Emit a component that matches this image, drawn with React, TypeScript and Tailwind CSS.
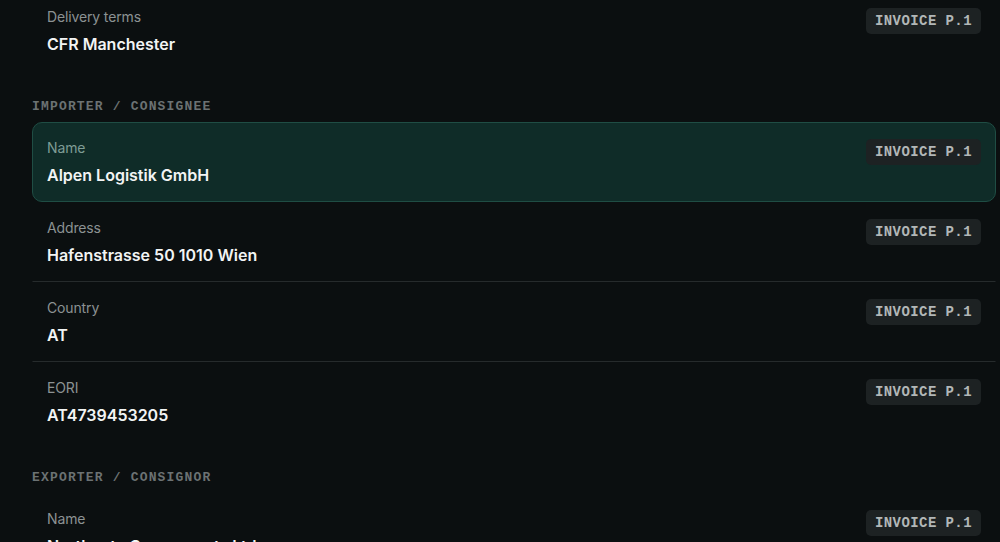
import React from "react";

type Field = { label: string; value: string; active?: boolean };
type Section = { title?: string; fields: Field[] };

const sections: Section[] = [
  { fields: [{ label: "Delivery terms", value: "CFR Manchester" }] },
  {
    title: "IMPORTER / CONSIGNEE",
    fields: [
      { label: "Name", value: "Alpen Logistik GmbH", active: true },
      { label: "Address", value: "Hafenstrasse 50 1010 Wien" },
      { label: "Country", value: "AT" },
      { label: "EORI", value: "AT4739453205" },
    ],
  },
  {
    title: "EXPORTER / CONSIGNOR",
    fields: [{ label: "Name", value: "Northgate Components Ltd" }],
  },
];

const sans = "font-['Inter','Noto_Sans',sans-serif]";
const mono = "font-['Liberation_Mono','DejaVu_Sans_Mono',monospace]";

function Row({ f, last }: { f: Field; last: boolean }) {
  const base = "flex items-start justify-between h-[80px] pl-[14px] pr-[14px] pt-[15px]";
  const cls = f.active
    ? `${base} rounded-[10px] border border-[#1f4d44] bg-[#0f2c28]`
    : `${base} border border-transparent ${last ? "" : "border-b-[#262b2c]"}`;
  return (
    <div className={cls}>
      <div className="flex flex-col">
        <div className={`text-[14px] leading-[20px] tracking-[-0.01em] ${f.active ? "text-[#7e9c95]" : "text-[#8c9293]"}`}>{f.label}</div>
        <div className="mt-[5px] text-[16px] leading-[24px] font-semibold text-[#f2f4f4]">{f.value}</div>
      </div>
      <div
        className={`${mono} mt-[1px] h-[26px] flex items-center pl-[9px] pr-[9px] rounded-[5px] bg-[#1d2223] text-[14px] font-bold tracking-[0.03em] text-[#b2b7b7]`}
      >
        INVOICE P.1
      </div>
    </div>
  );
}

export default function App() {
  return (
    <div className={`${sans} w-[1000px] h-[542px] overflow-hidden bg-[#0b0f10]`}>
      <div className="-mt-[9px] pl-[32px] pr-[4px]">
        {sections.map((s, i) => (
          <div key={i} className={s.title ? "mt-[28px]" : ""}>
            {s.title && (
              <div className={`${mono} h-[16px] mb-[7px] text-[13px] leading-[16px] font-bold tracking-[0.09em] text-[#6c7273]`}>
                {s.title}
              </div>
            )}
            {s.fields.map((f, j) => (
              <Row key={j} f={f} last={j === s.fields.length - 1} />
            ))}
          </div>
        ))}
      </div>
    </div>
  );
}
